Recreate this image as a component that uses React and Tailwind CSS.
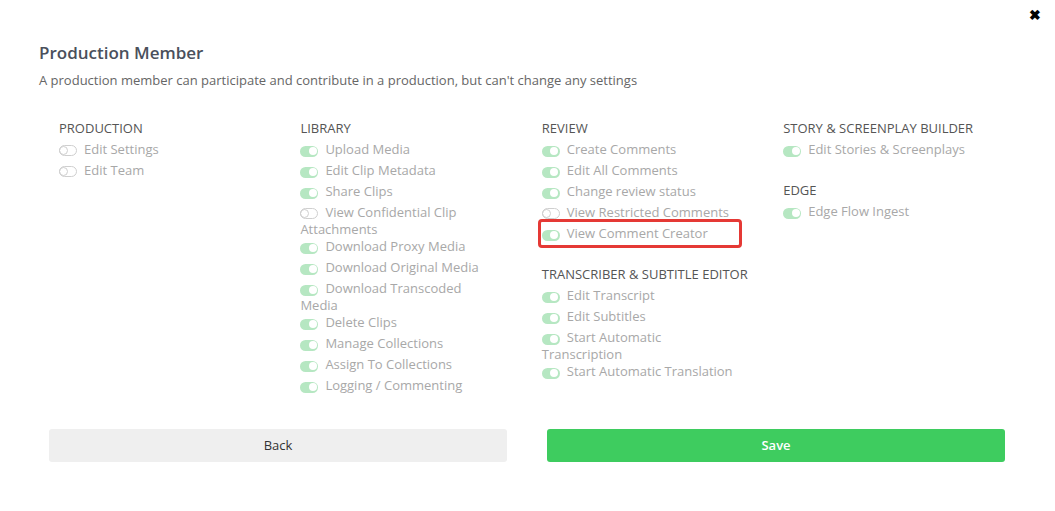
const sections = [
  [
    { title: "PRODUCTION", items: [["Edit Settings", false], ["Edit Team", false]] },
  ],
  [
    {
      title: "LIBRARY",
      items: [
        ["Upload Media", true],
        ["Edit Clip Metadata", true],
        ["Share Clips", true],
        ["View Confidential Clip Attachments", false],
        ["Download Proxy Media", true],
        ["Download Original Media", true],
        ["Download Transcoded Media", true],
        ["Delete Clips", true],
        ["Manage Collections", true],
        ["Assign To Collections", true],
        ["Logging / Commenting", true],
      ],
    },
  ],
  [
    {
      title: "REVIEW",
      items: [
        ["Create Comments", true],
        ["Edit All Comments", true],
        ["Change review status", true],
        ["View Restricted Comments", false],
        ["View Comment Creator", true, true],
      ],
    },
    {
      title: "TRANSCRIBER & SUBTITLE EDITOR",
      items: [
        ["Edit Transcript", true],
        ["Edit Subtitles", true],
        ["Start Automatic Transcription", true],
        ["Start Automatic Translation", true],
      ],
    },
  ],
  [
    { title: "STORY & SCREENPLAY BUILDER", items: [["Edit Stories & Screenplays", true]] },
    { title: "EDGE", items: [["Edge Flow Ingest", true]] },
  ],
]

function Toggle({ on }) {
  return on ? (
    <span className="inline-flex items-center justify-end w-[18px] h-[11px] rounded-full bg-[#b6e7c2] mr-[7px] align-[-1px] px-[1.5px]">
      <span className="w-[8px] h-[8px] rounded-full bg-white" />
    </span>
  ) : (
    <span className="inline-flex items-center w-[18px] h-[11px] rounded-full border border-[#cfcfcf] mr-[7px] align-[-1px]">
      <span className="w-[9px] h-[9px] rounded-full border border-[#cfcfcf] -ml-px" />
    </span>
  )
}

export default function App() {
  return (
    <div className="relative w-full h-[511px] bg-white text-[13px] leading-[17px]" style={{ fontFamily: '"Open Sans", sans-serif' }}>
      <button className="absolute right-[14px] top-[8px] text-[14px] font-bold text-black leading-none">✖</button>

      <div className="pt-[42px] pl-[39px]">
        <h2 className="text-[17px] leading-[22px] font-semibold text-[#4a505c]">Production Member</h2>
        <p className="mt-[8px] text-[13px] text-[#666]">
          A production member can participate and contribute in a production, but can't change any settings
        </p>

        <div className="flex mt-[31px] pl-[20px]">
          {sections.map((col, ci) => (
            <div key={ci} className="w-[241.4px] flex flex-col gap-[20px]">
              {col.map(sec => (
                <div key={sec.title}>
                  <div className="text-[#555] mb-[4px]">{sec.title}</div>
                  <ul className="flex flex-col w-[200px]">
                    {sec.items.map(([label, on, marked]) => (
                      <li key={label} className="relative min-h-[21px] text-[#a8a8a8]">
                        <Toggle on={on} />
                        {label}
                        {marked && (
                          <span className="absolute left-[-4px] top-[-6px] w-[204px] h-[29px] rounded-[4px] border-[3px] border-[#e53935]" />
                        )}
                      </li>
                    ))}
                  </ul>
                </div>
              ))}
            </div>
          ))}
        </div>
      </div>

      <div className="absolute left-[49px] top-[429px] flex gap-[40px]">
        <button className="w-[458px] h-[33px] rounded-[3px] bg-[#efefef] text-[#333] text-[13px]">Back</button>
        <button className="w-[458px] h-[33px] rounded-[3px] bg-[#3ecc5f] text-white text-[13px] font-semibold">Save</button>
      </div>
    </div>
  )
}
